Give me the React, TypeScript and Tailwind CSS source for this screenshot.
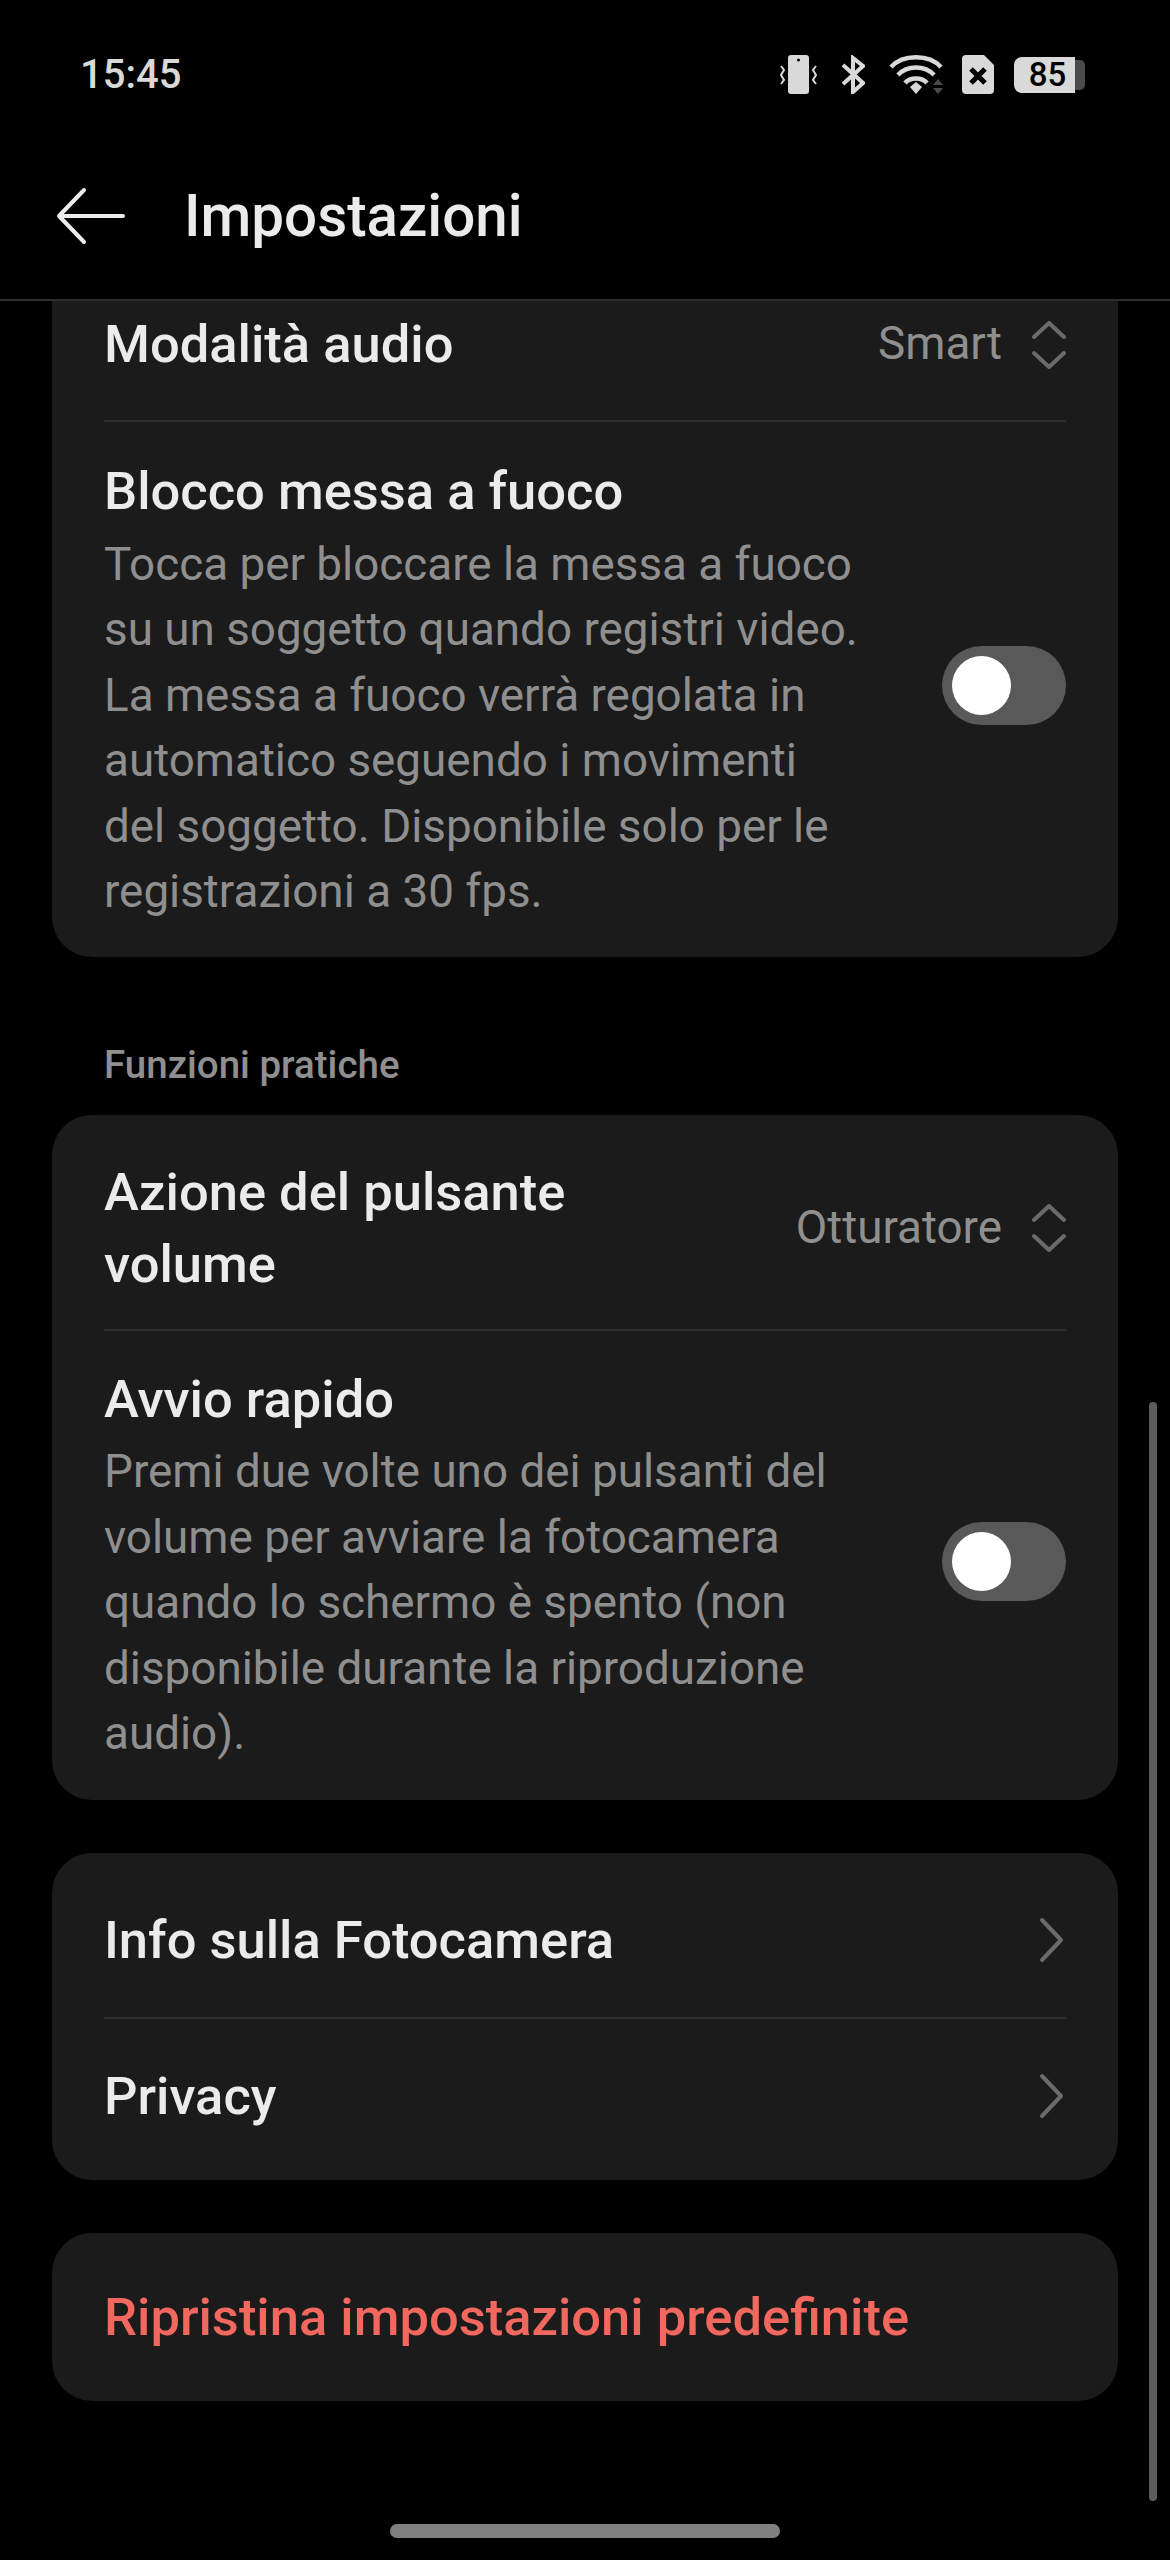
const font = { fontFamily: 'Roboto, sans-serif' }

function UpDown() {
  return (
    <svg width="34" height="48" viewBox="0 0 34 48" fill="none" stroke="#6b6b6b" strokeWidth="4" strokeLinecap="round" strokeLinejoin="round">
      <path d="M2 16 L17 2 L32 16" />
      <path d="M2 32 L17 46 L32 32" />
    </svg>
  )
}

function Chevron() {
  return (
    <svg className="mr-[2px]" width="25" height="46" viewBox="0 0 25 46" fill="none" stroke="#6b6b6b" strokeWidth="4" strokeLinecap="round" strokeLinejoin="round">
      <path d="M3 3 L22 23 L3 43" />
    </svg>
  )
}

function Toggle({ className }: { className: string }) {
  return (
    <div className={`${className} flex h-[79px] w-[124px] shrink-0 items-center rounded-full bg-[#595959] pl-[10px]`}>
      <div className="h-[59px] w-[59px] rounded-full bg-white" />
    </div>
  )
}

function StatusIcons() {
  return (
    <div className="flex items-center">
      <svg width="39" height="39" viewBox="0 0 39 39" fill="#d9d9d9">
        <rect x="9" y="0" width="21" height="39" rx="3" />
        <circle cx="19.5" cy="5" r="1.5" fill="#000" />
        <path d="M2 11 L5 15 L2 20 L5 25 L2 29 M37 11 L34 15 L37 20 L34 25 L37 29" fill="none" stroke="#d9d9d9" strokeWidth="2" />
      </svg>
      <svg className="ml-[24px]" width="23" height="39" viewBox="0 0 23 39" fill="none" stroke="#d9d9d9" strokeWidth="4">
        <path d="M1 10 L21 28 L11 37 V3 L21 11 L1 29" />
      </svg>
      <svg className="ml-[24px]" width="54" height="39" viewBox="0 0 54 39" fill="none">
        <path d="M2 12 C14 -1 40 -1 52 12" stroke="#d9d9d9" strokeWidth="4.5" />
        <path d="M9 20 C18 10 36 10 45 20" stroke="#d9d9d9" strokeWidth="4.5" />
        <path d="M16 28 C21 22 33 22 38 28" stroke="#d9d9d9" strokeWidth="4.5" />
        <path d="M21 32 L27 27 L33 32 L27 39 Z" fill="#d9d9d9" />
        <path d="M44 30 L49 24 L54 30 Z M44 33 L49 39 L54 33 Z" fill="#4a4a4a" />
      </svg>
      <svg className="ml-[19px]" width="32" height="39" viewBox="0 0 32 39" fill="#d9d9d9">
        <path d="M4 0 H22 L32 10 V35 A4 4 0 0 1 28 39 H4 A4 4 0 0 1 0 35 V4 A4 4 0 0 1 4 0 Z" />
        <path d="M9 14 L23 28 M23 14 L9 28" stroke="#000" strokeWidth="5" />
      </svg>
      <div className="relative ml-[20px] flex h-[36px] w-[61px] items-center justify-center rounded-l-[8px] bg-[#d9d9d9] pl-[6px] text-[33px] font-medium text-black">
        85
        <div className="absolute top-[3px] right-[-10px] h-[30px] w-[10px] rounded-r-[5px] bg-[#4a4a4a]" />
      </div>
    </div>
  )
}

export default function App() {
  return (
    <div className="relative h-[2560px] w-[1170px] overflow-hidden bg-black" style={font}>
      <div className="flex h-[146px] items-center justify-between pt-[3px] pr-[95px] pl-[80px]">
        <span className="text-[40px] font-medium text-[#d9d9d9]">15:45</span>
        <StatusIcons />
      </div>

      <header className="flex h-[155px] items-center border-b-[2px] border-[#2e2e2e] pb-[12px] pl-[56px]">
        <svg className="mb-[2px]" width="70" height="58" viewBox="0 0 70 58" fill="none" stroke="#ebebeb" strokeWidth="4" strokeLinecap="round" strokeLinejoin="round">
          <path d="M67 29 H3 M28 3 L3 29 L28 55" />
        </svg>
        <h1 className="ml-[58px] text-[58.3px] font-medium text-[#ebebeb]">Impostazioni</h1>
      </header>

      <main className="mx-[52px]">
        <section className="rounded-b-[40px] bg-[#1b1b1b] px-[52px]">
          <div className="flex h-[121px] items-center justify-between border-b-[2px] border-[#2e2e2e] pb-[32px]">
            <span className="text-[52.5px] font-medium text-[#ebebeb]">Modalità audio</span>
            <div className="flex items-center gap-[30px]">
              <span className="text-[45.8px] text-[#8f8f8f]">Smart</span>
              <UpDown />
            </div>
          </div>
          <div className="flex items-center justify-between pt-[36px] pb-[33px]">
            <div className="w-[800px]">
              <div className="mb-[8px] text-[52.5px] leading-[66px] font-medium text-[#ebebeb]">Blocco messa a fuoco</div>
              <p className="text-[45.8px] leading-[65.4px] text-[#8f8f8f]">
                Tocca per bloccare la messa a fuoco
                <br />
                su un soggetto quando registri video.
                <br />
                La messa a fuoco verrà regolata in
                <br />
                automatico seguendo i movimenti
                <br />
                del soggetto. Disponibile solo per le
                <br />
                registrazioni a 30 fps.
              </p>
            </div>
            <Toggle className="mb-[12px]" />
          </div>
        </section>

        <h2 className="mt-[83px] mb-[25px] pl-[52px] text-[38.5px] leading-[50px] font-medium text-[#8f8f8f]">Funzioni pratiche</h2>

        <section className="rounded-[40px] bg-[#1b1b1b] px-[52px]">
          <div className="flex h-[216px] items-center justify-between border-b-[2px] border-[#2e2e2e] pt-[12px]">
            <span className="text-[52.5px] leading-[72px] font-medium text-[#ebebeb]">
              Azione del pulsante
              <br />
              volume
            </span>
            <div className="flex items-center gap-[30px]">
              <span className="text-[45.8px] text-[#8f8f8f]">Otturatore</span>
              <UpDown />
            </div>
          </div>
          <div className="flex items-center justify-between pt-[35px] pb-[34px]">
            <div className="w-[800px]">
              <div className="mb-[7px] text-[52.5px] leading-[66px] font-medium text-[#ebebeb]">Avvio rapido</div>
              <p className="text-[45.8px] leading-[65.4px] text-[#8f8f8f]">
                Premi due volte uno dei pulsanti del
                <br />
                volume per avviare la fotocamera
                <br />
                quando lo schermo è spento (non
                <br />
                disponibile durante la riproduzione
                <br />
                audio).
              </p>
            </div>
            <Toggle className="mb-[10px]" />
          </div>
        </section>

        <section className="mt-[53px] rounded-[40px] bg-[#1b1b1b] px-[52px]">
          <div className="flex h-[166px] items-center justify-between border-b-[2px] border-[#2e2e2e] pt-[10px]">
            <span className="text-[52.5px] font-medium text-[#ebebeb]">Info sulla Fotocamera</span>
            <Chevron />
          </div>
          <div className="flex h-[161px] items-center justify-between pb-[8px]">
            <span className="text-[52.5px] font-medium text-[#ebebeb]">Privacy</span>
            <Chevron />
          </div>
        </section>

        <section className="mt-[53px] flex h-[168px] items-center rounded-[40px] bg-[#1b1b1b] px-[52px]">
          <span className="text-[52.5px] font-medium text-[#f2675e]">Ripristina impostazioni predefinite</span>
        </section>
      </main>

      <div className="absolute top-[1402px] right-[13px] h-[1099px] w-[8px] rounded-full bg-[#5c5c5c]" />
      <div className="absolute top-[2524px] left-[390px] h-[14px] w-[390px] rounded-full bg-[#808080]" />
    </div>
  )
}
